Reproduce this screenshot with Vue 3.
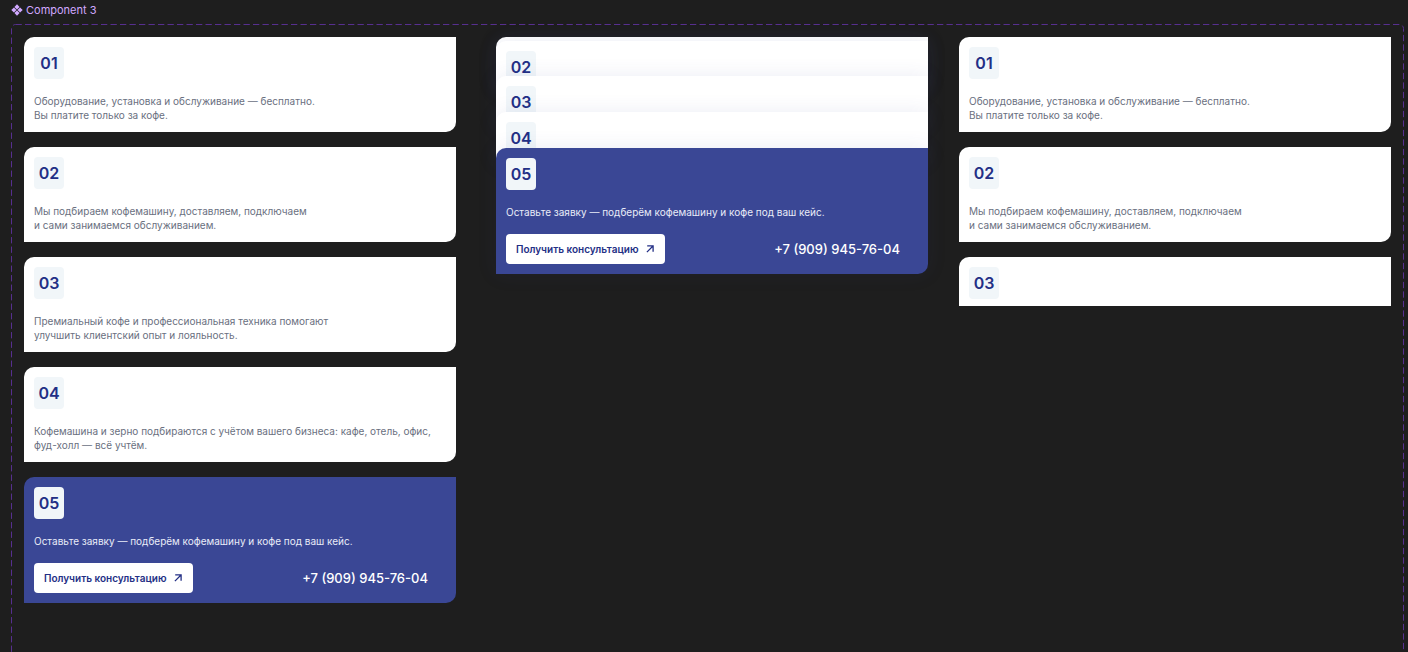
<script setup>
const steps = [
  { number: '01', lines: ['Оборудование, установка и обслуживание — бесплатно.', 'Вы платите только за кофе.'] },
  { number: '02', lines: ['Мы подбираем кофемашину, доставляем, подключаем', 'и сами занимаемся обслуживанием.'] },
  { number: '03', lines: ['Премиальный кофе и профессиональная техника помогают', 'улучшить клиентский опыт и лояльность.'] },
  { number: '04', lines: ['Кофемашина и зерно подбираются с учётом вашего бизнеса: кафе, отель, офис,', 'фуд-холл — всё учтём.'] },
  { number: '05', lines: ['Оставьте заявку — подберём кофемашину и кофе под ваш кейс.'], accent: true },
]

const [first, second, third, fourth, last] = steps

// Collapsed cards keep their number and hide the description.
const collapse = (card) => ({ number: card.number, collapsed: true })

const variants = [
  { name: 'list', cards: steps },
  { name: 'stack', cards: [{ collapsed: true }, collapse(second), collapse(third), collapse(fourth), last] },
  { name: 'clipped', cards: [first, second, collapse(third)] },
]
</script>

<template>
  <main class="canvas">
    <header class="title">
      <svg class="title-icon" viewBox="0 0 12 12" aria-hidden="true">
        <path d="M6 0.3 8.6 2.9 6 5.5 3.4 2.9ZM9.1 3.4 11.7 6 9.1 8.6 6.5 6ZM6 6.5 8.6 9.1 6 11.7 3.4 9.1ZM2.9 3.4 5.5 6 2.9 8.6 0.3 6Z" />
      </svg>
      <h1>Component 3</h1>
    </header>

    <div class="frame">
      <svg class="outline" aria-hidden="true">
        <rect x="0.5" y="0.5" rx="4" />
      </svg>

      <section v-for="variant in variants" :key="variant.name" class="column" :class="variant.name">
        <article
          v-for="(card, index) in variant.cards"
          :key="index"
          class="card"
          :class="{ accent: card.accent, collapsed: card.collapsed }"
        >
          <div v-if="card.number" class="number">{{ card.number }}</div>
          <p v-if="card.lines" class="text">
            <template v-for="(line, i) in card.lines" :key="i"><br v-if="i">{{ line }}</template>
          </p>
          <div v-if="card.accent" class="actions">
            <button type="button" class="consult">
              Получить консультацию
              <svg class="arrow" viewBox="0 0 8 8" aria-hidden="true">
                <path d="M0.9 7.1 7 1M1.2 0.9H7.1V6.8" />
              </svg>
            </button>
            <a class="phone" href="tel:+79099457604">+7 (909) 945-76-04</a>
          </div>
        </article>
      </section>
    </div>
  </main>
</template>

<style>
body {
  margin: 0;
  background: #1e1e1e;
}
</style>

<style scoped>
.canvas {
  box-sizing: border-box;
  display: flex;
  flex-direction: column;
  height: 100vh;
  overflow: hidden;
  background: #1e1e1e;
  font-family: Inter, "Liberation Sans", sans-serif;
}

.title {
  display: flex;
  align-items: center;
  gap: 3px;
  height: 20px;
  margin-bottom: 4px;
  padding-left: 11px;
  color: #d1a8ff;
}

.title-icon {
  width: 12px;
  height: 12px;
  fill: currentColor;
}

h1 {
  margin: 0;
  font-size: 11px;
  font-weight: 400;
  line-height: 20px;
}

.frame {
  position: relative;
  flex: 1 0 640px;
  display: flex;
  align-items: flex-start;
  margin: 0 4px 0 11px;
  padding: 13px;
}

.outline {
  position: absolute;
  inset: 0;
  width: 100%;
  height: 100%;
  pointer-events: none;
}

.outline rect {
  width: calc(100% - 1px);
  height: calc(100% - 1px);
  fill: none;
  stroke: #572f8f;
  stroke-width: 1;
  stroke-dasharray: 6.3 3.2;
}

.column {
  flex: 1 1 0;
  min-width: 0;
  display: flex;
  flex-direction: column;
  gap: 15px;
}

.stack {
  gap: 0;
  margin: 0 31px 0 40px;
}

.card {
  box-sizing: border-box;
  flex: none;
  display: flex;
  flex-direction: column;
  align-items: flex-start;
  gap: 15px;
  padding: 10px;
  border-radius: 10px 0;
  background: #fff;
  color: #6a7080;
}

.collapsed {
  min-height: 52px;
}

.clipped .collapsed {
  min-height: 0;
  padding-bottom: 7px;
  border-radius: 10px 0 0;
}

.stack .card {
  box-shadow: 0 0 20px rgba(57, 71, 149, 0.1);
}

.stack .card:nth-child(2) {
  margin-top: -48px;
}

.stack .card:nth-child(3) {
  margin-top: -17px;
}

.stack .card:nth-child(n + 4) {
  margin-top: -16px;
}

.accent {
  background: #3a4795;
  color: #e9ecf8;
}

.number {
  display: flex;
  align-items: center;
  justify-content: center;
  width: 30px;
  height: 32px;
  border-radius: 4px;
  background: #f1f6f9;
  color: #232f85;
  font-size: 16px;
  font-weight: 600;
}

.text {
  margin: 0;
  font-size: 10px;
  line-height: 14px;
}

.actions {
  box-sizing: border-box;
  display: flex;
  align-items: center;
  justify-content: space-between;
  width: 100%;
  padding-right: 18px;
}

.consult {
  display: flex;
  align-items: center;
  gap: 8px;
  height: 30px;
  padding: 0 11px 0 10px;
  border: 0;
  border-radius: 4px;
  background: #fff;
  color: #232f85;
  font: 600 10px/14px Inter, "Liberation Sans", sans-serif;
  cursor: pointer;
}

.arrow {
  width: 8px;
  height: 8px;
  fill: none;
  stroke: currentColor;
  stroke-width: 1.3;
}

.phone {
  color: #fff;
  font-size: 13px;
  font-weight: 500;
  line-height: 16px;
  text-decoration: none;
}
</style>
